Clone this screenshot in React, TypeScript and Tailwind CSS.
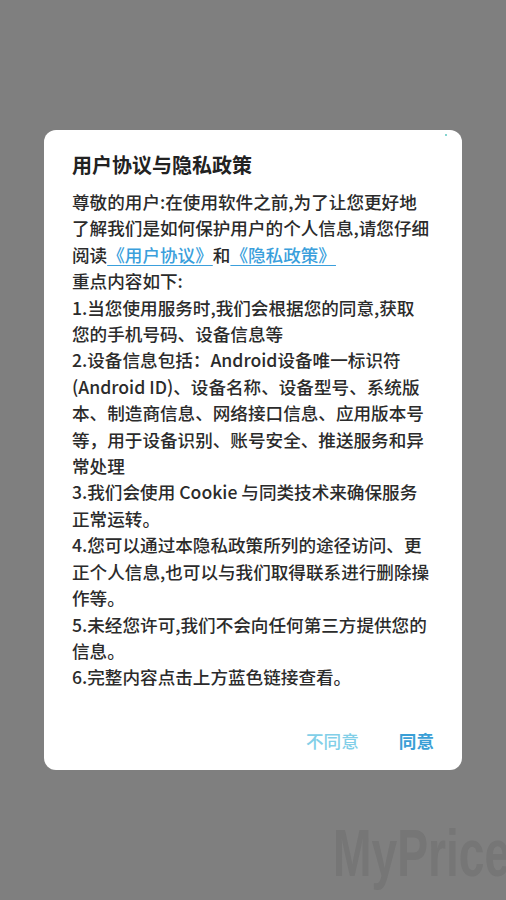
import React from "react";

const font = { fontFamily: '"Noto Sans CJK SC", "Noto Sans", sans-serif' };

function Link({ children }: { children: React.ReactNode }) {
  return (
    <a className="text-[#3b9fdc] underline decoration-1 underline-offset-[3px]" href="#">
      {children}
    </a>
  );
}

export default function App() {
  return (
    <div className="relative h-[900px] w-[506px] overflow-hidden bg-[#7f7f7f]" style={font}>
      <div className="pt-[130px] pl-[44px]">
        <div className="relative w-[418px] h-[640px] rounded-[12px] bg-white pl-[28px] pr-[22px] pt-[20px]">
          <span className="absolute right-[15px] top-[4px] h-[2px] w-[2px] rounded-full bg-[#5cc6c0]" />
          <h2 className="text-[20px] font-bold leading-[30px] text-[#222]">用户协议与隐私政策</h2>
          <div className="mt-[9px] text-[17.6px] font-medium leading-[26.4px] text-[#2b2b2b]">
            <p>
              尊敬的用户:在使用软件之前,为了让您更好地
              <br />
              了解我们是如何保护用户的个人信息,请您仔细
              <br />
              阅读<Link>《用户协议》</Link>和<Link>《隐私政策》</Link>
            </p>
            <p>重点内容如下:</p>
            <p>
              1.当您使用服务时,我们会根据您的同意,获取
              <br />
              您的手机号码、设备信息等
            </p>
            <p>
              2.设备信息包括：Android设备唯一标识符
              <br />
              (Android ID)、设备名称、设备型号、系统版
              <br />
              本、制造商信息、网络接口信息、应用版本号
              <br />
              等，用于设备识别、账号安全、推送服务和异
              <br />
              常处理
            </p>
            <p>
              3.我们会使用 Cookie 与同类技术来确保服务
              <br />
              正常运转。
            </p>
            <p>
              4.您可以通过本隐私政策所列的途径访问、更
              <br />
              正个人信息,也可以与我们取得联系进行删除操
              <br />
              作等。
            </p>
            <p>
              5.未经您许可,我们不会向任何第三方提供您的
              <br />
              信息。
            </p>
            <p>6.完整内容点击上方蓝色链接查看。</p>
          </div>
          <div className="mt-[37px] flex justify-end gap-[40px] pr-[6px] text-[17.6px] font-medium leading-[26px]">
            <button className="text-[#82cfe8]">不同意</button>
            <button className="font-bold text-[#3a9fd6]">同意</button>
          </div>
        </div>
      </div>
      <div
        className="absolute left-[333px] top-[818px] origin-left scale-x-[0.7] text-[66px] font-bold leading-[70px] text-[#767676]"
        style={{ fontFamily: '"Liberation Sans", sans-serif' }}
      >
        MyPrice
      </div>
    </div>
  );
}
